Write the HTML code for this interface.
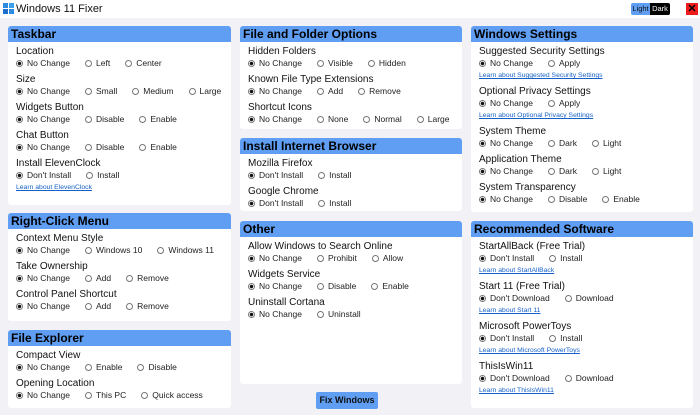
<!DOCTYPE html>
<html><head><meta charset="utf-8"><style>
*{margin:0;padding:0;box-sizing:border-box}
body{width:700px;height:415px;overflow:hidden;background:#f1f1f6;font-family:"Liberation Sans",sans-serif;color:#111;position:relative}
.top{position:absolute;left:0;top:0;width:700px;height:18px;background:#fff}
.title{position:absolute;left:16px;top:2px;font-size:11px;line-height:14px}
.p{position:absolute;background:#fff;border-radius:3px;overflow:hidden}
.h{background:#5f9ef2;height:16px;line-height:16px;font-weight:bold;font-size:12px;padding-left:3px;color:#000}
.c{padding:0 0 0 8px}
.l{font-size:10px;line-height:11px;height:15px;padding-top:4px}
.r{font-size:8.5px;line-height:13px;height:13px;color:#222;white-space:nowrap}
.r span{display:inline-block;margin-right:15px}
.r span::before{content:"";display:inline-block;width:7px;height:7px;border:1px solid #777;border-radius:50%;vertical-align:-1px;margin-right:4px;box-sizing:border-box}
.r span.s::before{background:radial-gradient(circle,#111 0 1.6px,#fff 1.9px)}
.a{font-size:6.8px;line-height:12px;height:12px;color:#1560c8;text-decoration:underline}
</style></head><body>
<div class="top"></div>
<svg style="position:absolute;left:3px;top:3px" width="11" height="11"><rect x="0" y="0" width="5" height="5" fill="#2a8be0"/><rect x="6" y="0" width="5" height="5" fill="#3aa0f0"/><rect x="0" y="6" width="5" height="5" fill="#1f6fd0"/><rect x="6" y="6" width="5" height="5" fill="#2a8be0"/></svg>
<div class="title">Windows 11 Fixer</div>
<div style="position:absolute;left:631px;top:3px;width:19px;height:12px;background:#5f9ef2;font-size:7.5px;line-height:12px;text-align:center;border-radius:2px 0 0 2px">Light</div>
<div style="position:absolute;left:650px;top:3px;width:20px;height:12px;background:#000;color:#fff;font-size:7.5px;line-height:12px;text-align:center;border-radius:0 2px 2px 0">Dark</div>
<div style="position:absolute;left:686px;top:3px;width:12px;height:12px;background:#f01c1c;color:#000;font-size:11px;line-height:12px;text-align:center;font-weight:bold">✕</div>

<div class="p" style="left:8px;top:26px;width:223px;height:179px"><div class="h">Taskbar</div><div class="c">
<div class="l">Location</div><div class="r"><span class="s">No Change</span><span>Left</span><span>Center</span></div>
<div class="l">Size</div><div class="r"><span class="s">No Change</span><span>Small</span><span>Medium</span><span>Large</span></div>
<div class="l">Widgets Button</div><div class="r"><span class="s">No Change</span><span>Disable</span><span>Enable</span></div>
<div class="l">Chat Button</div><div class="r"><span class="s">No Change</span><span>Disable</span><span>Enable</span></div>
<div class="l">Install ElevenClock</div><div class="r"><span class="s">Don't Install</span><span>Install</span></div>
<div class="a">Learn about ElevenClock</div></div></div>

<div class="p" style="left:8px;top:213px;width:223px;height:108px"><div class="h">Right-Click Menu</div><div class="c">
<div class="l">Context Menu Style</div><div class="r"><span class="s">No Change</span><span>Windows 10</span><span>Windows 11</span></div>
<div class="l">Take Ownership</div><div class="r"><span class="s">No Change</span><span>Add</span><span>Remove</span></div>
<div class="l">Control Panel Shortcut</div><div class="r"><span class="s">No Change</span><span>Add</span><span>Remove</span></div></div></div>

<div class="p" style="left:8px;top:330px;width:223px;height:78px"><div class="h">File Explorer</div><div class="c">
<div class="l">Compact View</div><div class="r"><span class="s">No Change</span><span>Enable</span><span>Disable</span></div>
<div class="l">Opening Location</div><div class="r"><span class="s">No Change</span><span>This PC</span><span>Quick access</span></div></div></div>

<div class="p" style="left:240px;top:26px;width:222px;height:103px"><div class="h">File and Folder Options</div><div class="c">
<div class="l">Hidden Folders</div><div class="r"><span class="s">No Change</span><span>Visible</span><span>Hidden</span></div>
<div class="l">Known File Type Extensions</div><div class="r"><span class="s">No Change</span><span>Add</span><span>Remove</span></div>
<div class="l">Shortcut Icons</div><div class="r"><span class="s">No Change</span><span>None</span><span>Normal</span><span>Large</span></div></div></div>

<div class="p" style="left:240px;top:138px;width:222px;height:73px"><div class="h">Install Internet Browser</div><div class="c">
<div class="l">Mozilla Firefox</div><div class="r"><span class="s">Don't Install</span><span>Install</span></div>
<div class="l">Google Chrome</div><div class="r"><span class="s">Don't Install</span><span>Install</span></div></div></div>

<div class="p" style="left:240px;top:221px;width:222px;height:163px"><div class="h">Other</div><div class="c">
<div class="l">Allow Windows to Search Online</div><div class="r"><span class="s">No Change</span><span>Prohibit</span><span>Allow</span></div>
<div class="l">Widgets Service</div><div class="r"><span class="s">No Change</span><span>Disable</span><span>Enable</span></div>
<div class="l">Uninstall Cortana</div><div class="r"><span class="s">No Change</span><span>Uninstall</span></div></div></div>

<div style="position:absolute;left:316px;top:392px;width:62px;height:17px;background:#5f9ef2;border-radius:2px;font-size:9px;font-weight:bold;line-height:17px;text-align:center">Fix Windows</div>

<div class="p" style="left:471px;top:26px;width:222px;height:186px"><div class="h">Windows Settings</div><div class="c">
<div class="l">Suggested Security Settings</div><div class="r"><span class="s">No Change</span><span>Apply</span></div>
<div class="a">Learn about Suggested Security Settings</div>
<div class="l">Optional Privacy Settings</div><div class="r"><span class="s">No Change</span><span>Apply</span></div>
<div class="a">Learn about Optional Privacy Settings</div>
<div class="l">System Theme</div><div class="r"><span class="s">No Change</span><span>Dark</span><span>Light</span></div>
<div class="l">Application Theme</div><div class="r"><span class="s">No Change</span><span>Dark</span><span>Light</span></div>
<div class="l">System Transparency</div><div class="r"><span class="s">No Change</span><span>Disable</span><span>Enable</span></div></div></div>

<div class="p" style="left:471px;top:221px;width:222px;height:187px"><div class="h">Recommended Software</div><div class="c">
<div class="l">StartAllBack (Free Trial)</div><div class="r"><span class="s">Don't Install</span><span>Install</span></div>
<div class="a">Learn about StartAllBack</div>
<div class="l">Start 11 (Free Trial)</div><div class="r"><span class="s">Don't Download</span><span>Download</span></div>
<div class="a">Learn about Start 11</div>
<div class="l">Microsoft PowerToys</div><div class="r"><span class="s">Don't Install</span><span>Install</span></div>
<div class="a">Learn about Microsoft PowerToys</div>
<div class="l">ThisIsWin11</div><div class="r"><span class="s">Don't Download</span><span>Download</span></div>
<div class="a">Learn about ThisIsWin11</div></div></div>
</body></html>
